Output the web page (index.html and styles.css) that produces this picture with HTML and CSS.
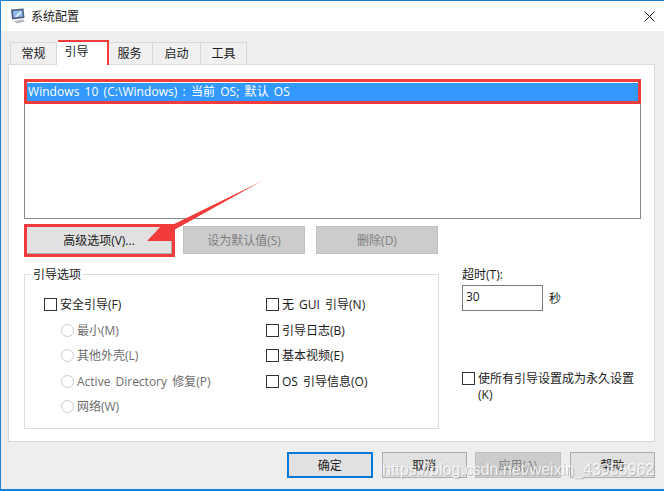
FILE: index.html
```html
<!DOCTYPE html>
<html lang="zh">
<head>
<meta charset="utf-8">
<title>系统配置</title>
<link rel="stylesheet" href="styles.css">
</head>
<body>
<div class="window">
  <header class="titlebar">
    <svg class="app-icon" width="16" height="16" viewBox="0 0 16 16">
      <path d="M1 1.5 L13.5 0.5 L14.5 10 L2 11.5 Z" fill="#4f5f80"/>
      <path d="M3 3 L12 2.3 L12.8 8.6 L3.6 9.6 Z" fill="#8fbcf0"/>
      <path d="M5 9 L10 3.5 L11.5 4.5 L7 9 Z" fill="#eaf2fb"/>
      <path d="M4 13 L13 11.5 L15 13.5 L7 15.5 Z" fill="#b5b9c0"/>
    </svg>
    <span class="title">系统配置</span>
    <svg class="close" width="11" height="11" viewBox="0 0 11 11"><path d="M0.5 0.5 L10.5 10.5 M10.5 0.5 L0.5 10.5" stroke="#111" stroke-width="1" fill="none"/></svg>
  </header>
  <main class="content">
    <nav class="tabs">
      <span class="tab t1">常规</span>
      <span class="tab active">引导</span>
      <span class="tab t3">服务</span>
      <span class="tab t4">启动</span>
      <span class="tab t5">工具</span>
    </nav>
    <section class="panel">
      <div class="listbox"><div class="list-item">Windows 10 (C:\Windows) : 当前 OS; 默认 OS</div></div>
      <div class="list-buttons">
        <button class="btn wide focus-btn">高级选项(V)...</button>
        <button class="btn wide disabled">设为默认值(S)</button>
        <button class="btn wide disabled">删除(D)</button>
      </div>
      <div class="options">
        <fieldset class="group">
          <legend>引导选项</legend>
          <div class="group-cols">
            <div class="col-left">
              <label class="check"><i class="box"></i>安全引导(F)</label>
              <label class="radio"><i class="dot"></i>最小(M)</label>
              <label class="radio"><i class="dot"></i>其他外壳(L)</label>
              <label class="radio"><i class="dot"></i>Active Directory 修复(P)</label>
              <label class="radio"><i class="dot"></i>网络(W)</label>
            </div>
            <div class="col-right">
              <label class="check"><i class="box"></i>无 GUI 引导(N)</label>
              <label class="check"><i class="box"></i>引导日志(B)</label>
              <label class="check"><i class="box"></i>基本视频(E)</label>
              <label class="check"><i class="box"></i>OS 引导信息(O)</label>
            </div>
          </div>
        </fieldset>
        <aside class="side">
          <div class="timeout-label">超时(T):</div>
          <div class="timeout-row"><span class="input">30</span><span>秒</span></div>
          <label class="check permanent"><i class="box"></i><span>使所有引导设置成为永久设置<br>(K)</span></label>
        </aside>
      </div>
    </section>
    <footer class="actions">
      <button class="btn act primary">确定</button>
      <button class="btn act">取消</button>
      <button class="btn act disabled">应用(A)</button>
      <button class="btn act">帮助</button>
    </footer>
  </main>
  <div class="mark mark-tab"></div>
  <div class="mark mark-item"></div>
  <div class="mark mark-btn"></div>
  <svg class="arrow" width="116" height="61" viewBox="0 0 116 61">
    <path d="M115 0 L27 49 L25 60 L0 60 L16 43 L21 46 Z" fill="#f23c3c"/>
  </svg>
  <div class="watermark">https://blog.csdn.net/weixin_43955962</div>
</div>
</body>
</html>
```
FILE: styles.css
```css
* { box-sizing: border-box; }
html, body { margin: 0; padding: 0; }
body {
  width: 664px;
  height: 491px;
  overflow: hidden;
  background: #f0f0f0;
  font: 12px/17px "Open Sans", "Noto Sans CJK SC", sans-serif;
  word-spacing: 2px;
  color: #1a1a1a;
}
.window {
  position: relative;
  width: 664px;
  height: 491px;
  border-top: 1px solid #1683d8;
  border-left: 1px solid #1683d8;
  display: flex;
  flex-direction: column;
}
.titlebar {
  height: 30px;
  background: #fff;
  display: flex;
  align-items: center;
  padding: 0 9px 0 9px;
  flex: none;
}
.app-icon { flex: none; }
.title { margin-left: 5px; }
.close { margin-left: auto; }
.content {
  flex: 1;
  background: #eeeeee;
  padding: 11px 9px 0 7px;
  border-bottom: 2px solid #1683d8;
  display: flex;
  flex-direction: column;
}
.tabs { display: flex; height: 22px; padding-left: 2px; flex: none; }
.tab {
  height: 22px;
  border: 1px solid #d9d9d9;
  border-bottom: none;
  border-left: none;
  background: #f0f0f0;
  text-align: center;
  line-height: 21px;
  position: relative;
}
.t1 { width: 47px; border-left: 1px solid #d9d9d9; }
.active { width: 50px; background: #fff; border: none; height: 23px; z-index: 2; padding-right: 11px; line-height: 19px; }
.t3 { width: 46px; border-left: none; }
.t4 { width: 48px; }
.t5 { width: 46px; }
.panel {
  height: 378px;
  background: #fff;
  border: 1px solid #d9d9d9;
  padding: 15px 13px 0 15px;
  flex: none;
}
.listbox {
  height: 139px;
  border: 1px solid #828790;
  padding: 2px;
  background: #fff;
}
.list-item {
  height: 18px;
  background: #3399ff;
  color: #fff;
  line-height: 17px;
  padding-left: 1px;
  letter-spacing: 0.05px;
  white-space: nowrap;
}
.list-buttons {
  display: flex;
  margin: 7px 0 0 2px;
  gap: 11px;
}
.btn {
  font: inherit;
  word-spacing: inherit;
  color: #1a1a1a;
  background: #e1e1e1;
  border: 1px solid #adadad;
  padding: 0;
  height: 28px;
}
.wide { width: 122px; height: 28px; }
.focus-btn { width: 146px; }
.disabled { background: #cccccc; border-color: #bfbfbf; color: #7f7f7f; }
.options { display: flex; margin-top: 13px; }
.group {
  margin: 0;
  width: 415px;
  height: 162px;
  border: 1px solid #dcdcdc;
  padding: 0 0 0 19px;
  flex: none;
}
.group legend {
  padding: 0 2px;
  margin-left: -13px;
  line-height: 15px;
}
.group-cols { display: flex; padding-top: 10px; }
.col-left { width: 222px; }
.check, .radio { display: flex; align-items: center; height: 25.5px; white-space: nowrap; }
.radio { padding-left: 17px; color: #6d6d6d; }
.box {
  width: 13px;
  height: 13px;
  border: 1px solid #333;
  background: #fff;
  margin-right: 3px;
  flex: none;
}
.dot {
  width: 13px;
  height: 13px;
  border: 1px solid #cccccc;
  border-radius: 50%;
  margin-right: 3px;
  flex: none;
}
.side { margin-left: 23px; flex: 1; margin-top: -1px; }
.timeout-label { line-height: 17px; }
.timeout-row { display: flex; align-items: center; gap: 6px; margin-top: 2px; }
.input {
  width: 81px;
  height: 26px;
  border: 1px solid #7a7a7a;
  padding: 0 3px;
  line-height: 21px;
  display: block;
}
.permanent { height: auto; align-items: flex-start; margin-top: 60px; line-height: 16px; white-space: normal; }
.permanent .box { margin-top: 1px; }
.actions { display: flex; gap: 9px; padding: 10px 0 0 279px; }
.act { width: 86px; height: 26px; }
.act.disabled { margin-left: -1px; }
.primary { border: 2px solid #0078d7; }
.mark { position: absolute; border-style: solid; border-color: #f23c3c; border-width: 3px; pointer-events: none; }
.mark-tab { left: 57px; top: 39px; width: 51px; height: 25px; border-width: 3px 4px; }
.mark-item { left: 23px; top: 78px; width: 617px; height: 25px; }
.mark-btn { left: 23px; top: 223px; width: 151px; height: 33px; }
.arrow { position: absolute; left: 146px; top: 180px; }
.watermark {
  position: absolute;
  left: 381px;
  top: 459px;
  font: 16px/20px "Liberation Sans", sans-serif;
  word-spacing: 0;
  color: rgba(255, 255, 255, 0.8);
  text-shadow: 1px 1px 0 rgba(130, 130, 130, 0.45);
  white-space: nowrap;
}
```
